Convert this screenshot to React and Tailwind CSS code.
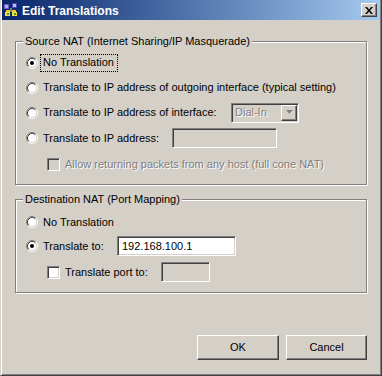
import React from 'react';

const sunken =
  'border border-t-[#808080] border-l-[#808080] border-b-white border-r-white shadow-[inset_1px_1px_0_#404040,inset_-1px_-1px_0_#d4d0c8]';
const raised =
  'border border-t-white border-l-white border-b-[#404040] border-r-[#404040] shadow-[inset_-1px_-1px_0_#808080,inset_1px_1px_0_#d4d0c8]';

function Radio({ checked }) {
  return (
    <svg width="12" height="12" viewBox="0 0 12 12" className="shrink-0">
      <circle cx="6" cy="6" r="5" fill="#fff" />
      <path d="M2.11 9.89A5.5 5.5 0 0 1 9.89 2.11" fill="none" stroke="#808080" />
      <path d="M9.89 2.11A5.5 5.5 0 0 1 2.11 9.89" fill="none" stroke="#fff" />
      <path d="M2.82 9.18A4.5 4.5 0 0 1 9.18 2.82" fill="none" stroke="#404040" />
      <path d="M9.18 2.82A4.5 4.5 0 0 1 2.82 9.18" fill="none" stroke="#d4d0c8" />
      {checked && <circle cx="6" cy="6" r="2" fill="#000" />}
    </svg>
  );
}

function Checkbox({ disabled }) {
  return <div className={`w-[13px] h-[13px] shrink-0 ${sunken} ${disabled ? 'bg-[#d4d0c8]' : 'bg-white'}`} />;
}

function Group({ label, className, children }) {
  return (
    <div
      className={`relative w-[352px] border border-[#808080] shadow-[1px_1px_0_#fff,inset_1px_1px_0_#fff] ${className}`}
    >
      <span className="absolute -top-[8px] left-[7px] px-[2px] bg-[#d4d0c8] leading-[14px]">{label}</span>
      {children}
    </div>
  );
}

function TitleIcon() {
  return (
    <svg width="16" height="16" viewBox="0 0 16 16">
      <rect x="1" y="2" width="5" height="5" fill="#6a5acd" />
      <rect x="2" y="3" width="3" height="3" fill="#b0a8f0" />
      <rect x="9" y="1" width="5" height="5" fill="#4a4ab0" />
      <rect x="10" y="2" width="3" height="3" fill="#c0c0ff" />
      <path d="M3 8h10v2H3z" fill="#e8d020" />
      <path d="M2 10h5v4H2zM9 10h5v4H9z" fill="#f0e040" />
      <path d="M4 11h2v2H4zM11 11h2v2h-2z" fill="#40a040" />
      <path d="M7 6h2v4H7z" fill="#808080" />
    </svg>
  );
}

export default function App() {
  return (
    <div className="w-[382px] h-[376px] overflow-hidden bg-[#d4d0c8] font-['Liberation_Sans',Arial,sans-serif] text-[11px] text-black">
      <div className="w-full h-full flex flex-col border-l border-r border-b border-l-[#d4d0c8] border-r-[#404040] border-b-[#404040] shadow-[inset_1px_0_0_#fff,inset_-1px_-1px_0_#808080] px-[1px]">
        {/* title bar */}
        <div className="h-[20px] shrink-0 flex items-center bg-linear-to-r from-[#0a246a] to-[#a6caf0] pl-[1px] pr-[3px]">
          <TitleIcon />
          <span className="ml-[3px] text-white font-bold text-[12px] leading-none pt-[1px]">Edit Translations</span>
          <div className={`ml-auto w-[16px] h-[14px] bg-[#d4d0c8] flex items-center justify-center ${raised}`}>
            <svg width="8" height="7" viewBox="0 0 8 7">
              <path d="M0 0h2l2 2.5L6 0h2L5 3.5 8 7H6L4 4.5 2 7H0l3-3.5z" fill="#000" />
            </svg>
          </div>
        </div>

        <div className="flex flex-col pl-[13px]">
          {/* Source NAT */}
          <Group label="Source NAT (Internet Sharing/IP Masquerade)" className="mt-[21px] h-[144px] pt-[8px] pl-[10px]">
            <div className="h-[25px] flex items-center">
              <Radio checked />
              <span className="ml-[2px] h-[18px] flex items-center border border-dotted border-black pl-[2px] pr-[3px]">
                No Translation
              </span>
            </div>
            <div className="h-[25px] flex items-center">
              <Radio />
              <span className="ml-[5px]">Translate to IP address of outgoing interface (typical setting)</span>
            </div>
            <div className="h-[25px] flex items-center">
              <div className="w-[205px] flex items-center">
                <Radio />
                <span className="ml-[5px]">Translate to IP address of interface:</span>
              </div>
              <div className={`w-[68px] h-[20px] flex items-center bg-[#d4d0c8] ${sunken}`}>
                <span className="flex-1 pl-[3px] text-[#808080] [text-shadow:1px_1px_0_#fff]">Dial-In</span>
                <div className={`w-[16px] h-[16px] mr-[1px] flex items-center justify-center bg-[#d4d0c8] ${raised}`}>
                  <svg width="7" height="5" viewBox="0 0 7 5">
                    <path d="M1 1h6L4 4z" fill="#fff" />
                    <path d="M0 0h7L3.5 4z" fill="#808080" />
                  </svg>
                </div>
              </div>
            </div>
            <div className="h-[26px] flex items-center">
              <div className="w-[146px] flex items-center">
                <Radio />
                <span className="ml-[5px]">Translate to IP address:</span>
              </div>
              <div className={`w-[105px] h-[20px] bg-[#d4d0c8] ${sunken}`} />
            </div>
            <div className="h-[26px] flex items-center pl-[21px]">
              <Checkbox disabled />
              <span className="ml-[5px] text-[#808080] [text-shadow:1px_1px_0_#fff]">
                Allow returning packets from any host (full cone NAT)
              </span>
            </div>
          </Group>

          {/* Destination NAT */}
          <Group label="Destination NAT (Port Mapping)" className="mt-[14px] h-[94px] pt-[10px] pl-[10px]">
            <div className="h-[24px] flex items-center">
              <Radio />
              <span className="ml-[5px]">No Translation</span>
            </div>
            <div className="h-[24px] flex items-center">
              <div className="w-[91px] flex items-center">
                <Radio checked />
                <span className="ml-[5px]">Translate to:</span>
              </div>
              <div className={`w-[119px] h-[20px] flex items-center bg-white pl-[4px] ${sunken}`}>192.168.100.1</div>
            </div>
            <div className="mt-[2px] h-[24px] flex items-center pl-[21px]">
              <div className="w-[114px] flex items-center">
                <Checkbox />
                <span className="ml-[5px]">Translate port to:</span>
              </div>
              <div className={`w-[49px] h-[20px] bg-[#d4d0c8] ${sunken}`} />
            </div>
          </Group>

          {/* buttons */}
          <div className="w-[352px] mt-[42px] flex justify-end gap-[7px]">
            <button className={`w-[82px] h-[25px] bg-[#d4d0c8] ${raised}`}>OK</button>
            <button className={`w-[81px] h-[25px] bg-[#d4d0c8] ${raised}`}>Cancel</button>
          </div>
        </div>
      </div>
    </div>
  );
}
